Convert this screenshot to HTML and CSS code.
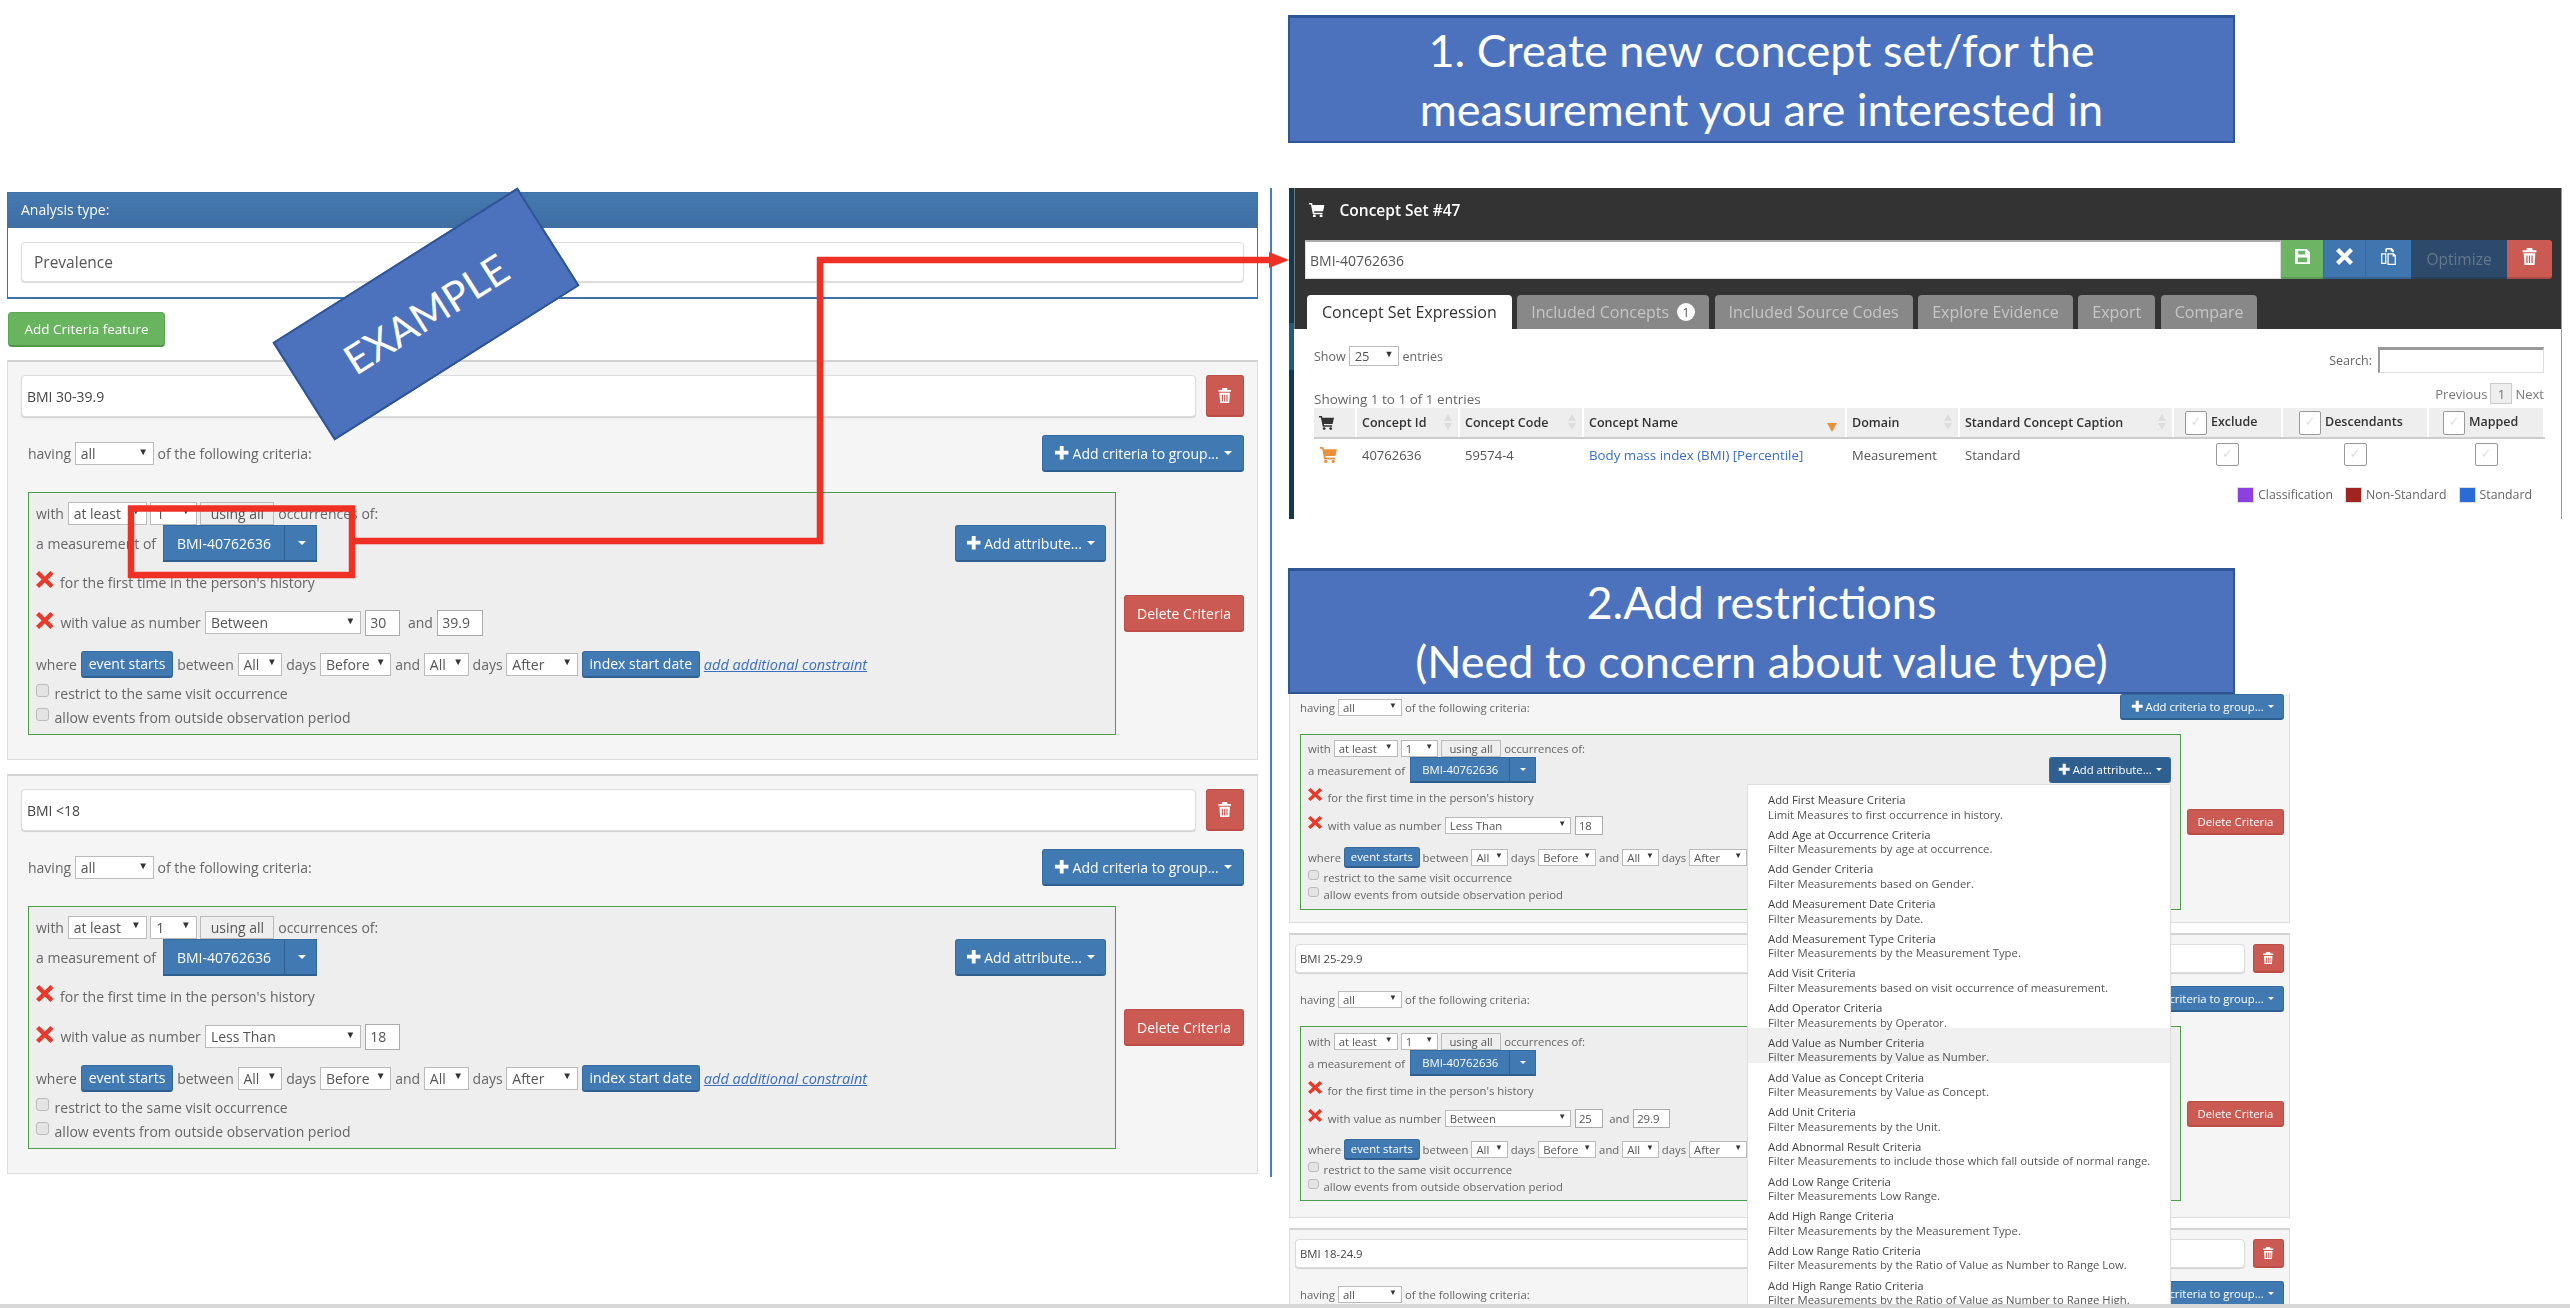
FILE: index.html
```html
<!DOCTYPE html>
<html>
<head>
<title>Prevalence criteria walkthrough</title>
<link rel="stylesheet" href="styles.css">
</head>
<body>
<svg class="defs" width="0" height="0">
  <symbol id="i-plus" viewBox="0 0 16 16"><path d="M6 1h4v5h5v4h-5v5H6v-5H1V6h5z"/></symbol>
  <symbol id="i-trash" viewBox="0 0 16 16"><path fill-rule="evenodd" d="M5.5 0h5l.5 2h3.5v2h-13V2H5zM2.5 5h11l-.8 11H3.3zM5 7v7h1.2V7zM7.4 7v7h1.2V7zM9.8 7v7H11V7z"/></symbol>
  <symbol id="i-remove" viewBox="1 1 14 14" preserveAspectRatio="none"><path d="M3.5 1 8 5.5 12.5 1 15 3.5 10.5 8l4.5 4.5-2.5 2.5L8 10.5 3.5 15 1 12.5 5.5 8 1 3.5z"/></symbol>
  <symbol id="i-cart" viewBox="0 0 16 16"><path d="M0 1h3.2l.5 2H16l-1.5 6.5H5.2l.3 1.5H14v1.6H4L2 2.6H0z"/><circle cx="5.5" cy="14.5" r="1.5"/><circle cx="12.5" cy="14.5" r="1.5"/></symbol>
  <symbol id="i-save" viewBox="0 0 16 16"><path fill-rule="evenodd" d="M1 1h11l3 3v11H1zM4 2.5V6h6.5V2.5zM3.5 9v4.5h9V9z"/></symbol>
  <symbol id="i-copy" viewBox="0 0 16 16"><path fill-rule="evenodd" d="M6 0h5l2 2v2h-1.5V3H10V1.5H6.5V4H5V1zM1 5h5v10H1zM2.2 6.2v7.6h2.6V6.2zM7 5h6l2 2v9H7zM8.2 6.2v8.6h5.600V8h-2V6.2z"/></symbol>
</svg>

<div class="title-box title-one">1. Create new concept set/for the<br>measurement you are interested in</div>
<div class="title-box title-two">2.Add restrictions<br>(Need to concern about value type)</div>
<div class="divider"></div>

<div class="left-shot">
  <div class="type-panel">
    <div class="type-head">Analysis type:</div>
    <div class="type-body"><div class="type-select">Prevalence</div></div>
  </div>
  <button class="add-feature">Add Criteria feature</button>

  <div class="card">
    <div class="name-row">
      <input class="name-input" value="BMI 30-39.9">
      <button class="btn danger trash"><svg class="ico"><use href="#i-trash"/></svg></button>
    </div>
    <div class="having-row">
      <div class="inline">having <span class="sel w-all">all<i>▼</i></span> of the following criteria:</div>
      <button class="btn add-group"><svg class="ico"><use href="#i-plus"/></svg> Add criteria to group...<b class="caret"></b></button>
    </div>
    <div class="body-row">
      <div class="crit-box">
        <div class="with-row inline">with <span class="sel w-least">at least<i>▼</i></span> <span class="sel w-one">1<i>▼</i></span> <span class="sel w-using">using all</span> occurrences of:</div>
        <div class="measure-row">
          <div class="inline">a measurement of <span class="split"><span class="split-main">BMI-40762636</span><span class="split-arrow"><b class="caret"></b></span></span></div>
          <button class="btn add-attr"><svg class="ico"><use href="#i-plus"/></svg> Add attribute...<b class="caret"></b></button>
        </div>
        <div class="first-row inline"><svg class="red-x"><use href="#i-remove"/></svg> for the first time in the person's history</div>
        <div class="value-row inline"><svg class="red-x"><use href="#i-remove"/></svg> with value as number <span class="sel w-op">Between<i>▼</i></span> <input class="num w-num" value="30"> &nbsp;and <input class="num w-num2" value="39.9"></div>
        <div class="where-row inline">where <button class="btn chip">event starts</button> between <span class="sel w-sm">All<i>▼</i></span> days <span class="sel w-dir">Before<i>▼</i></span> and <span class="sel w-sm">All<i>▼</i></span> days <span class="sel w-dir">After<i>▼</i></span> <button class="btn chip">index start date</button> <a class="more" href="#">add additional constraint</a></div>
        <label class="check-row"><input type="checkbox"> restrict to the same visit occurrence</label>
        <label class="check-row"><input type="checkbox"> allow events from outside observation period</label>
      </div>
      <button class="btn danger del">Delete Criteria</button>
    </div>
  </div>

  <div class="card">
    <div class="name-row">
      <input class="name-input" value="BMI <18">
      <button class="btn danger trash"><svg class="ico"><use href="#i-trash"/></svg></button>
    </div>
    <div class="having-row">
      <div class="inline">having <span class="sel w-all">all<i>▼</i></span> of the following criteria:</div>
      <button class="btn add-group"><svg class="ico"><use href="#i-plus"/></svg> Add criteria to group...<b class="caret"></b></button>
    </div>
    <div class="body-row">
      <div class="crit-box">
        <div class="with-row inline">with <span class="sel w-least">at least<i>▼</i></span> <span class="sel w-one">1<i>▼</i></span> <span class="sel w-using">using all</span> occurrences of:</div>
        <div class="measure-row">
          <div class="inline">a measurement of <span class="split"><span class="split-main">BMI-40762636</span><span class="split-arrow"><b class="caret"></b></span></span></div>
          <button class="btn add-attr"><svg class="ico"><use href="#i-plus"/></svg> Add attribute...<b class="caret"></b></button>
        </div>
        <div class="first-row inline"><svg class="red-x"><use href="#i-remove"/></svg> for the first time in the person's history</div>
        <div class="value-row inline"><svg class="red-x"><use href="#i-remove"/></svg> with value as number <span class="sel w-op">Less Than<i>▼</i></span> <input class="num w-num" value="18"></div>
        <div class="where-row inline">where <button class="btn chip">event starts</button> between <span class="sel w-sm">All<i>▼</i></span> days <span class="sel w-dir">Before<i>▼</i></span> and <span class="sel w-sm">All<i>▼</i></span> days <span class="sel w-dir">After<i>▼</i></span> <button class="btn chip">index start date</button> <a class="more" href="#">add additional constraint</a></div>
        <label class="check-row"><input type="checkbox"> restrict to the same visit occurrence</label>
        <label class="check-row"><input type="checkbox"> allow events from outside observation period</label>
      </div>
      <button class="btn danger del">Delete Criteria</button>
    </div>
  </div>
</div>

<div class="concept-shot">
  <div class="concept-head">
    <div class="concept-title"><svg class="ico cart-ico"><use href="#i-cart"/></svg> Concept Set #47</div>
    <div class="concept-input-row">
      <input class="concept-input" value="BMI-40762636">
      <button class="tool green"><svg class="ico"><use href="#i-save"/></svg></button>
      <button class="tool blue"><svg class="ico"><use href="#i-remove"/></svg></button>
      <button class="tool blue copy"><svg class="ico"><use href="#i-copy"/></svg></button>
      <button class="tool dim">Optimize</button>
      <button class="tool red"><svg class="ico"><use href="#i-trash"/></svg></button>
    </div>
    <div class="tabs">
      <div class="tab active">Concept Set Expression</div>
      <div class="tab">Included Concepts <span class="badge">1</span></div>
      <div class="tab">Included Source Codes</div>
      <div class="tab">Explore Evidence</div>
      <div class="tab">Export</div>
      <div class="tab">Compare</div>
    </div>
  </div>
  <div class="concept-body">
    <div class="dt-top">
      <div class="inline">Show <span class="sel w-len">25<i>▼</i></span> entries</div>
      <div class="inline dt-search">Search: <input class="search-input"></div>
    </div>
    <div class="dt-info">
      <div>Showing 1 to 1 of 1 entries</div>
      <div class="pager">Previous <span class="page-no">1</span> Next</div>
    </div>
    <table class="dt">
      <colgroup><col class="c-cart"><col class="c-id"><col class="c-code"><col class="c-name"><col class="c-domain"><col class="c-cap"><col class="c-ex"><col class="c-desc"><col class="c-map"></colgroup>
      <thead>
        <tr>
          <th><svg class="ico th-cart"><use href="#i-cart"/></svg></th>
          <th>Concept Id<span class="sort"></span></th>
          <th>Concept Code<span class="sort"></span></th>
          <th>Concept Name<span class="sort-on"></span></th>
          <th>Domain<span class="sort"></span></th>
          <th>Standard Concept Caption<span class="sort"></span></th>
          <th class="th-ex"><span class="tick head">✓</span>Exclude</th>
          <th class="th-desc"><span class="tick head">✓</span>Descendants</th>
          <th class="th-map"><span class="tick head">✓</span>Mapped</th>
        </tr>
      </thead>
      <tbody>
        <tr>
          <td><svg class="ico td-cart"><use href="#i-cart"/></svg></td>
          <td>40762636</td>
          <td>59574-4</td>
          <td><a class="concept-link" href="#">Body mass index (BMI) [Percentile]</a></td>
          <td>Measurement</td>
          <td>Standard</td>
          <td class="mid"><span class="tick">✓</span></td>
          <td class="mid"><span class="tick">✓</span></td>
          <td class="mid"><span class="tick">✓</span></td>
        </tr>
      </tbody>
    </table>
    <div class="legend">
      <span class="swatch purple"></span>Classification
      <span class="swatch maroon"></span>Non-Standard
      <span class="swatch std"></span>Standard
    </div>
  </div>
</div>

<div class="attr-shot">
  <div class="card small cut">
    <div class="having-row">
      <div class="inline">having <span class="sel w-all">all<i>▼</i></span> of the following criteria:</div>
      <button class="btn add-group"><svg class="ico"><use href="#i-plus"/></svg> Add criteria to group...<b class="caret"></b></button>
    </div>
    <div class="body-row">
      <div class="crit-box">
        <div class="with-row inline">with <span class="sel w-least">at least<i>▼</i></span> <span class="sel w-one">1<i>▼</i></span> <span class="sel w-using">using all</span> occurrences of:</div>
        <div class="measure-row">
          <div class="inline">a measurement of <span class="split"><span class="split-main">BMI-40762636</span><span class="split-arrow"><b class="caret"></b></span></span></div>
          <button class="btn add-attr pressed"><svg class="ico"><use href="#i-plus"/></svg> Add attribute...<b class="caret"></b></button>
        </div>
        <div class="first-row inline"><svg class="red-x"><use href="#i-remove"/></svg> for the first time in the person's history</div>
        <div class="value-row inline"><svg class="red-x"><use href="#i-remove"/></svg> with value as number <span class="sel w-op">Less Than<i>▼</i></span> <input class="num w-num" value="18"></div>
        <div class="where-row inline">where <button class="btn chip">event starts</button> between <span class="sel w-sm">All<i>▼</i></span> days <span class="sel w-dir">Before<i>▼</i></span> and <span class="sel w-sm">All<i>▼</i></span> days <span class="sel w-dir">After<i>▼</i></span></div>
        <label class="check-row"><input type="checkbox"> restrict to the same visit occurrence</label>
        <label class="check-row"><input type="checkbox"> allow events from outside observation period</label>
      </div>
      <button class="btn danger del">Delete Criteria</button>
    </div>
  </div>

  <div class="card small">
    <div class="name-row">
      <input class="name-input" value="BMI 25-29.9">
      <button class="btn danger trash"><svg class="ico"><use href="#i-trash"/></svg></button>
    </div>
    <div class="having-row">
      <div class="inline">having <span class="sel w-all">all<i>▼</i></span> of the following criteria:</div>
      <button class="btn add-group"><svg class="ico"><use href="#i-plus"/></svg> Add criteria to group...<b class="caret"></b></button>
    </div>
    <div class="body-row">
      <div class="crit-box">
        <div class="with-row inline">with <span class="sel w-least">at least<i>▼</i></span> <span class="sel w-one">1<i>▼</i></span> <span class="sel w-using">using all</span> occurrences of:</div>
        <div class="measure-row">
          <div class="inline">a measurement of <span class="split"><span class="split-main">BMI-40762636</span><span class="split-arrow"><b class="caret"></b></span></span></div>
          <button class="btn add-attr"><svg class="ico"><use href="#i-plus"/></svg> Add attribute...<b class="caret"></b></button>
        </div>
        <div class="first-row inline"><svg class="red-x"><use href="#i-remove"/></svg> for the first time in the person's history</div>
        <div class="value-row inline"><svg class="red-x"><use href="#i-remove"/></svg> with value as number <span class="sel w-op">Between<i>▼</i></span> <input class="num w-num" value="25"> &nbsp;and <input class="num w-num2" value="29.9"></div>
        <div class="where-row inline">where <button class="btn chip">event starts</button> between <span class="sel w-sm">All<i>▼</i></span> days <span class="sel w-dir">Before<i>▼</i></span> and <span class="sel w-sm">All<i>▼</i></span> days <span class="sel w-dir">After<i>▼</i></span></div>
        <label class="check-row"><input type="checkbox"> restrict to the same visit occurrence</label>
        <label class="check-row"><input type="checkbox"> allow events from outside observation period</label>
      </div>
      <button class="btn danger del">Delete Criteria</button>
    </div>
  </div>

  <div class="card small">
    <div class="name-row">
      <input class="name-input" value="BMI 18-24.9">
      <button class="btn danger trash"><svg class="ico"><use href="#i-trash"/></svg></button>
    </div>
    <div class="having-row">
      <div class="inline">having <span class="sel w-all">all<i>▼</i></span> of the following criteria:</div>
      <button class="btn add-group"><svg class="ico"><use href="#i-plus"/></svg> Add criteria to group...<b class="caret"></b></button>
    </div>
  </div>

  <ul class="attr-menu">
    <li><b>Add First Measure Criteria</b><span>Limit Measures to first occurrence in history.</span></li>
    <li><b>Add Age at Occurrence Criteria</b><span>Filter Measurements by age at occurrence.</span></li>
    <li><b>Add Gender Criteria</b><span>Filter Measurements based on Gender.</span></li>
    <li><b>Add Measurement Date Criteria</b><span>Filter Measurements by Date.</span></li>
    <li><b>Add Measurement Type Criteria</b><span>Filter Measurements by the Measurement Type.</span></li>
    <li><b>Add Visit Criteria</b><span>Filter Measurements based on visit occurrence of measurement.</span></li>
    <li><b>Add Operator Criteria</b><span>Filter Measurements by Operator.</span></li>
    <li class="hover"><b>Add Value as Number Criteria</b><span>Filter Measurements by Value as Number.</span></li>
    <li><b>Add Value as Concept Criteria</b><span>Filter Measurements by Value as Concept.</span></li>
    <li><b>Add Unit Criteria</b><span>Filter Measurements by the Unit.</span></li>
    <li><b>Add Abnormal Result Criteria</b><span>Filter Measurements to include those which fall outside of normal range.</span></li>
    <li><b>Add Low Range Criteria</b><span>Filter Measurements Low Range.</span></li>
    <li><b>Add High Range Criteria</b><span>Filter Measurements by the Measurement Type.</span></li>
    <li><b>Add Low Range Ratio Criteria</b><span>Filter Measurements by the Ratio of Value as Number to Range Low.</span></li>
    <li><b>Add High Range Ratio Criteria</b><span>Filter Measurements by the Ratio of Value as Number to Range High.</span></li>
  </ul>
</div>

<div class="bottom-bar"></div>

<div class="example-tag">EXAMPLE</div>

<svg class="callout" width="2570" height="1308">
  <rect x="131" y="508.5" width="221" height="66.5"/>
  <polyline points="352,541 820,541 820,260 1272,260"/>
  <polygon points="1269,252 1289,260 1269,268"/>
</svg>
</body>
</html>
```

FILE: styles.css
```css
body {
  margin: 0;
  width: 2570px;
  height: 1308px;
  overflow: hidden;
  position: relative;
  background-color: #fff;
  font-family: "Open Sans", sans-serif;
  color: #666;
}
.defs {
  position: absolute;
}
input, button {
  font-family: inherit;
}
.ico {
  width: 1em;
  height: 1em;
  fill: currentColor;
  flex: none;
}

/* slide pieces: pasted on a free canvas */
.title-box {
  position: absolute;
  left: 1288px;
  width: 947px;
  box-sizing: border-box;
  background-color: #4d72bd;
  border: 2px solid #2f5597;
  border-top-width: 3px;
  color: #fff;
  font-family: Lato, "Open Sans", sans-serif;
  font-size: 45px;
  line-height: 59px;
  text-align: center;
}
.title-one {
  top: 15px;
  height: 128px;
  padding-top: 3px;
}
.title-two {
  top: 568px;
  height: 126px;
  padding-top: 2px;
}
.divider {
  position: absolute;
  left: 1270px;
  top: 188px;
  width: 2px;
  height: 989px;
  background-color: #4a7fb5;
}
.left-shot, .concept-shot, .attr-shot {
  filter: blur(0.3px);
}
.left-shot {
  position: absolute;
  left: 7px;
  top: 192px;
  width: 1251px;
}
.concept-shot {
  position: absolute;
  left: 1289px;
  top: 188px;
  width: 1273px;
  height: 331px;
  box-sizing: border-box;
  border-left: 5px solid #123a4e;
  border-right: 1px solid #999;
}
.concept-shot::before {
  content: "";
  position: absolute;
  left: -5px;
  top: 135px;
  width: 5px;
  height: 47px;
  background-color: #235a78;
}
.attr-shot {
  position: absolute;
  left: 1289px;
  top: 694px;
  width: 1001px;
  height: 610px;
  overflow: hidden;
  background-color: #fff;
}
.bottom-bar {
  position: absolute;
  left: 0;
  right: 0;
  top: 1304px;
  height: 4px;
  background-color: #d8d8d8;
}
.example-tag {
  position: absolute;
  left: 281px;
  top: 256px;
  width: 290px;
  height: 116px;
  box-sizing: border-box;
  transform: rotate(-32.3deg);
  background-color: #4d72bd;
  border: 2px solid #2f5597;
  color: #fff;
  font-family: Lato, "Open Sans", sans-serif;
  font-size: 41px;
  line-height: 112px;
  text-align: center;
}
.callout {
  position: absolute;
  left: 0;
  top: 0;
  pointer-events: none;
}
.callout rect, .callout polyline {
  fill: none;
  stroke: #ee3124;
  stroke-width: 6.5;
}
.callout polygon {
  fill: #ee3124;
}

/* analysis type */
.type-panel {
  height: 107px;
  box-sizing: border-box;
  border: 1px solid #3f72ab;
  border-bottom-width: 2px;
  background-color: #fff;
}
.type-head {
  height: 35px;
  line-height: 33px;
  padding-left: 13px;
  background: linear-gradient(#4479b0, #3f6ea2);
  color: #fff;
  font-size: 14px;
}
.type-body {
  padding: 14px 13px 0;
}
.type-select {
  height: 40px;
  box-sizing: border-box;
  padding-left: 12px;
  line-height: 38px;
  background-color: #fff;
  border: 1px solid #ddd;
  border-radius: 4px;
  box-shadow: 0 1px 1px rgba(0, 0, 0, 0.15);
  color: #555;
  font-size: 15.5px;
}
.add-feature {
  display: block;
  margin: 13px 0 13px 1px;
  height: 35px;
  width: 157px;
  padding: 0;
  background-color: #69b45f;
  border: 1px solid #5ca653;
  border-bottom: 2px solid #4f9648;
  border-radius: 4px;
  color: #fff;
  font-size: 13.5px;
}

/* criteria card */
.card {
  --row-x: 7px;
  --pad: 13px;
  --box-w: 1088px;
  --name-h: 42px;
  --sel-h: 23px;
  --num-h: 26px;
  --chip-h: 27px;
  --btn-h: 37px;
  --x-h: 17px;
  font-size: 14px;
  box-sizing: border-box;
  height: 400px;
  margin-bottom: 14px;
  padding: 13px var(--pad) 0;
  background-color: #f5f5f5;
  border: 1px solid #ddd;
  border-top: 2px solid #d2d2d2;
}
.card.small {
  --row-x: 5px;
  --pad: 5px;
  --box-w: 881px;
  --name-h: 29px;
  --sel-h: 17px;
  --num-h: 19px;
  --chip-h: 21px;
  --btn-h: 26px;
  --x-h: 13px;
  font-size: 11.34px;
  height: 285px;
  margin-bottom: 10px;
  padding-top: 9px;
}
.card.small.cut {
  height: 229px;
  padding-top: 0;
  border-top: none;
}
.inline {
  display: flex;
  align-items: center;
  gap: .27em;
  white-space: nowrap;
}
.name-row {
  display: flex;
  justify-content: space-between;
  gap: .7em;
}
.name-input {
  flex: 1;
  min-width: 0;
  height: var(--name-h);
  box-sizing: border-box;
  padding: 0 .35em;
  background-color: #fff;
  border: 1px solid #ddd;
  border-radius: 4px;
  box-shadow: 0 1px 1px rgba(0, 0, 0, 0.15);
  color: #444;
  font-size: 1em;
}
.having-row {
  display: flex;
  align-items: center;
  justify-content: space-between;
  margin: 18px 0 20px var(--row-x);
}
.small .having-row {
  margin: 13px 0 14px var(--row-x);
}
.small.cut .having-row {
  margin: 0 0 14px var(--row-x);
}
.body-row {
  display: flex;
  align-items: center;
  justify-content: space-between;
  padding-left: var(--row-x);
}
.crit-box {
  width: var(--box-w);
  box-sizing: border-box;
  padding: 8px 9px 4px 7px;
  background-color: #eee;
  border: 1px solid #4a9e4a;
}
.small .crit-box {
  padding-top: 5px;
  padding-bottom: 5px;
}
.cut .crit-box {
  padding-top: 4px;
  padding-bottom: 6px;
}
.with-row {
  height: 24px;
}
.measure-row {
  display: flex;
  align-items: center;
  justify-content: space-between;
  height: 37px;
  margin-top: 0;
}
.first-row {
  height: 36px;
  margin-top: 2px;
}
.value-row {
  height: 31px;
  margin-top: 7px;
  gap: .3em;
}
.where-row {
  height: 30px;
  margin-top: 11px;
}
.check-row {
  display: flex;
  align-items: center;
  gap: .4em;
  height: 24.5px;
  white-space: nowrap;
}
.where-row + .check-row {
  margin-top: 2px;
}
.small .with-row {
  height: 18px;
}
.small .measure-row {
  height: 26px;
}
.small .first-row {
  height: 24px;
  margin-top: 2px;
}
.small .value-row {
  height: 28px;
  margin-top: 2px;
}
.small .where-row {
  height: 22px;
  margin-top: 6px;
}
.cut .where-row {
  margin-top: 7px;
}
.small .check-row {
  height: 17px;
}
.small .where-row + .check-row {
  margin-top: 1px;
}
.check-row input {
  appearance: none;
  width: 13px;
  height: 13px;
  margin: -6px 0 0;
  background-color: #e4e4e4;
  border: 1px solid #bbb;
  border-radius: 3px;
}
.small .check-row input {
  width: 11px;
  height: 10px;
}
.red-x {
  width: 1.25em;
  height: var(--x-h);
  margin: -5px .2em 0 0;
  fill: #e8392a;
}
.sel {
  display: inline-flex;
  align-items: center;
  justify-content: space-between;
  height: var(--sel-h);
  box-sizing: border-box;
  padding: 0 .35em;
  background-color: #fff;
  border: 1px solid #bbb;
  color: #555;
}
.sel i {
  font-style: normal;
  font-size: .7em;
  color: #333;
  margin-top: -.5em;
}
.w-all, .w-least { width: 5.64em; }
.w-one { width: 3.29em; }
.w-using { width: 5.3em; background-color: #eee; justify-content: center; }
.w-op { width: 11.14em; }
.w-sm { width: 3.21em; }
.w-dir { width: 5.1em; }
.w-num { width: 2.5em; }
.w-num2 { width: 3.3em; }
.num {
  height: var(--num-h);
  box-sizing: border-box;
  padding: 0 .3em;
  background-color: #fff;
  border: 1px solid #aaa;
  color: #555;
  font-size: 1em;
}
.btn {
  display: inline-flex;
  align-items: center;
  justify-content: center;
  gap: .2em;
  height: var(--btn-h);
  padding: 0 .9em;
  background-color: #417ab3;
  border: 1px solid #356a9e;
  border-bottom: 2px solid #2f5f8f;
  border-radius: 3px;
  color: #fff;
  font-size: 1em;
  white-space: nowrap;
}
.btn .ico {
  font-size: 1.1em;
}
.btn.danger {
  background-color: #cb5a53;
  border-color: #bb4c46;
}
.btn.pressed {
  background-color: #2f5f8f;
}
.trash {
  height: var(--name-h);
  width: 2.7em;
  padding: 0;
  flex: none;
}
.add-group {
  width: 14.43em;
  padding: 0;
}
.add-attr {
  width: 10.8em;
  padding: 0;
}
.del {
  width: 8.57em;
  padding: 0;
}
.chip {
  height: var(--chip-h);
  padding: 0 .5em;
}
.caret {
  display: inline-block;
  width: 0;
  height: 0;
  margin-left: .15em;
  border-left: .3em solid transparent;
  border-right: .3em solid transparent;
  border-top: .32em solid #fff;
}
.split {
  display: inline-flex;
  height: var(--btn-h);
  margin-left: .2em;
  background-color: #417ab3;
  border: 1px solid #356a9e;
  border-bottom: 2px solid #2f5f8f;
  box-sizing: border-box;
  color: #fff;
}
.split-main {
  display: flex;
  align-items: center;
  padding: 0 .95em;
  border-right: 1px solid #2f5f8f;
}
.split-arrow {
  display: flex;
  align-items: center;
  width: 2.2em;
  justify-content: center;
}
.more {
  color: #3b6fc1;
  font-size: 1.04em;
  font-style: italic;
}

/* concept set */
.concept-head {
  height: 141px;
  background-color: #333;
  border-left: 1px solid #777;
}
.concept-title {
  display: flex;
  align-items: center;
  gap: 15px;
  height: 52px;
  box-sizing: border-box;
  padding: 0 0 9px 14px;
  color: #fff;
  font-size: 15.5px;
  font-weight: 600;
}
.concept-input-row {
  display: flex;
  height: 39px;
  margin: 0 9px 0 10px;
}
.concept-input {
  flex: 1;
  min-width: 0;
  box-sizing: border-box;
  padding: 0 4px;
  background-color: #fff;
  border: 1px solid #ddd;
  border-top: 2px solid #aaa;
  color: #555;
  font-size: 14px;
}
.tool {
  width: 42px;
  padding: 0;
  border: none;
  border-bottom: 2px solid rgba(0, 0, 0, 0.15);
  color: #fff;
  font-size: 17px;
}
.green { background-color: #6db564; }
.blue { background-color: #3f76b0; border-left: 1px solid #356a9e; }
.copy { width: 46px; }
.dim {
  width: 96px;
  background-color: #2d4a6c;
  color: #65778c;
  font-size: 15.5px;
}
.red { width: 45px; background-color: #cb5a53; border-radius: 0 3px 3px 0; }
.tabs {
  display: flex;
  gap: 5.5px;
  margin: 16px 0 0 12px;
}
.tab {
  display: flex;
  align-items: center;
  gap: 8px;
  height: 34px;
  padding: 0 14px;
  background-color: #888;
  border-radius: 4px 4px 0 0;
  color: #c6c6c6;
  font-size: 16px;
  white-space: nowrap;
}
.tab.active {
  padding: 0 15px;
  background-color: #fff;
  color: #333;
}
.badge {
  display: inline-flex;
  align-items: center;
  justify-content: center;
  width: 18px;
  height: 18px;
  border-radius: 50%;
  background-color: #fff;
  color: #555;
  font-size: 12px;
}
.concept-body {
  height: 190px;
  box-sizing: border-box;
  padding: 17px 17px 0 20px;
  background-color: #fff;
  font-size: 13.5px;
  color: #666;
}
.dt-top {
  display: flex;
  justify-content: space-between;
  align-items: flex-start;
  height: 37px;
  font-size: 12.5px;
}
.w-len {
  --sel-h: 20px;
  width: 50px;
  font-size: 13px;
}
.dt-search {
  gap: 6px;
  padding-top: 1px;
}
.search-input {
  width: 166px;
  height: 26px;
  box-sizing: border-box;
  border: 1px solid #ddd;
  border-top: 3px solid #999;
  border-left: 2px solid #999;
}
.dt-info {
  display: flex;
  justify-content: space-between;
  align-items: flex-end;
  height: 25px;
}
.pager {
  display: flex;
  align-items: center;
  gap: 3px;
  color: #777;
  margin-bottom: 4px;
  font-size: 13px;
}
.page-no {
  display: inline-block;
  width: 22px;
  height: 21px;
  line-height: 20px;
  box-sizing: border-box;
  text-align: center;
  background-color: #eee;
  border: 1px solid #ccc;
}
.dt {
  width: 1230px;
  table-layout: fixed;
  border-collapse: collapse;
  font-size: 13px;
}
.c-cart { width: 42px; }
.c-id { width: 103px; }
.c-code { width: 124px; }
.c-name { width: 263px; }
.c-domain { width: 113px; }
.c-cap { width: 214px; }
.c-ex { width: 109px; }
.c-desc { width: 146px; }
.c-map { width: 116px; }
.dt th {
  position: relative;
  height: 29px;
  padding: 0 0 0 5px;
  background-color: #eee;
  border-bottom: 2px solid #ccc;
  border-right: 2px solid #fff;
  color: #333;
  font-size: 12.5px;
  font-weight: 600;
  text-align: left;
  white-space: nowrap;
}
.dt td {
  height: 31px;
  padding: 0 0 0 6px;
  color: #555;
  white-space: nowrap;
}
.dt td.mid {
  text-align: center;
  padding: 0;
}
.th-cart {
  display: block;
  font-size: 15px;
  color: #333;
}
.td-cart {
  display: block;
  font-size: 17px;
  color: #e8913f;
}
.th-ex { padding-left: 11px !important; }
.th-desc { padding-left: 16px !important; }
.th-map { padding-left: 14px !important; }
.tick {
  display: inline-block;
  width: 23px;
  height: 23px;
  box-sizing: border-box;
  line-height: 20px;
  text-align: center;
  background-color: #fff;
  border: 1px solid #999;
  border-radius: 2px;
  color: #ddd;
  font-family: "DejaVu Sans", sans-serif;
  font-size: 13px;
}
.tick.head {
  width: 22px;
  height: 24px;
  margin-right: 4px;
  vertical-align: middle;
  font-weight: 400;
}
.sort, .sort-on {
  position: absolute;
  right: 6px;
  top: 6px;
  width: 8px;
  height: 16px;
}
.sort::before, .sort::after {
  content: "";
  position: absolute;
  left: 0;
  border-left: 4px solid transparent;
  border-right: 4px solid transparent;
}
.sort::before {
  top: 0;
  border-bottom: 7px solid #ddd;
}
.sort::after {
  bottom: 0;
  border-top: 7px solid #ddd;
}
.sort-on {
  height: 0;
  top: 15px;
  width: 0;
  right: 8px;
  border-left: 5px solid transparent;
  border-right: 5px solid transparent;
  border-top: 9px solid #e8913f;
}
.concept-link {
  color: #3a6fc4;
  font-size: 13.3px;
  text-decoration: none;
}
.legend {
  display: flex;
  align-items: center;
  justify-content: flex-end;
  margin: 16px 12px 0 0;
  font-size: 12.3px;
  color: #666;
}
.swatch {
  width: 17px;
  height: 16px;
  margin: 0 4px 0 12px;
  box-sizing: border-box;
  border: 1px solid #ddd;
}
.purple { background-color: #8e3fe0; }
.maroon { background-color: #a0241f; }
.std { background-color: #2a6bd6; }

/* attribute dropdown, open over the cards */
.attr-menu {
  position: absolute;
  left: 458px;
  top: 90px;
  width: 424px;
  box-sizing: border-box;
  margin: 0;
  padding: 0;
  list-style: none;
  background-color: #fff;
  border: 1px solid #ddd;
  border-bottom: none;
  font-size: 11.34px;
}
.attr-menu li {
  height: 34.7px;
  box-sizing: border-box;
  padding: 8px 0 0 20px;
}
.attr-menu b, .attr-menu span {
  display: block;
  font-weight: 400;
  line-height: 14.5px;
  white-space: nowrap;
}
.attr-menu b {
  color: #444;
}
.attr-menu span {
  color: #555;
}
.attr-menu .hover {
  background-color: #f0f0f0;
}
```
